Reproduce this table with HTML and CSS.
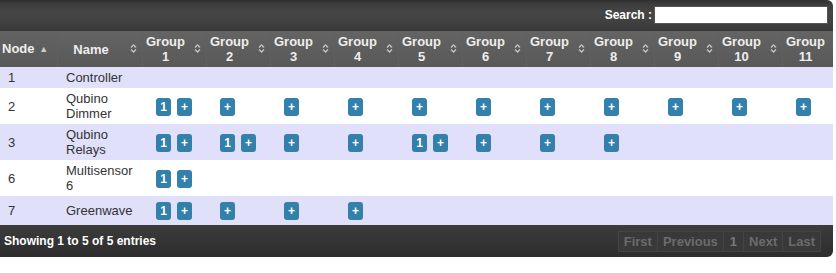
FILE: index.html
```html
<!DOCTYPE html>
<html>
<head>
<meta charset="utf-8">
<link rel="stylesheet" href="styles.css">
</head>
<body>
<div class="dt">
  <div class="toolbar">
    <label class="search-label">Search :</label>
    <input class="search-input" type="text">
  </div>
  <table class="grid">
    <colgroup>
      <col class="c-node"><col class="c-name">
      <col class="c-grp"><col class="c-grp"><col class="c-grp"><col class="c-grp"><col class="c-grp"><col class="c-grp"><col class="c-grp"><col class="c-grp"><col class="c-grp"><col class="c-grp"><col class="c-grp">
    </colgroup>
    <thead>
      <tr>
        <th class="th-node">Node <span class="tri">▲</span></th>
        <th>Name<svg class="sort" viewBox="0 0 7 9"><path d="M1 3.5 L3.5 1 L6 3.5 M1 5.5 L3.5 8 L6 5.5"/></svg></th>
        <th>Group<br>1<svg class="sort" viewBox="0 0 7 9"><path d="M1 3.5 L3.5 1 L6 3.5 M1 5.5 L3.5 8 L6 5.5"/></svg></th>
        <th>Group<br>2<svg class="sort" viewBox="0 0 7 9"><path d="M1 3.5 L3.5 1 L6 3.5 M1 5.5 L3.5 8 L6 5.5"/></svg></th>
        <th>Group<br>3<svg class="sort" viewBox="0 0 7 9"><path d="M1 3.5 L3.5 1 L6 3.5 M1 5.5 L3.5 8 L6 5.5"/></svg></th>
        <th>Group<br>4<svg class="sort" viewBox="0 0 7 9"><path d="M1 3.5 L3.5 1 L6 3.5 M1 5.5 L3.5 8 L6 5.5"/></svg></th>
        <th>Group<br>5<svg class="sort" viewBox="0 0 7 9"><path d="M1 3.5 L3.5 1 L6 3.5 M1 5.5 L3.5 8 L6 5.5"/></svg></th>
        <th>Group<br>6<svg class="sort" viewBox="0 0 7 9"><path d="M1 3.5 L3.5 1 L6 3.5 M1 5.5 L3.5 8 L6 5.5"/></svg></th>
        <th>Group<br>7<svg class="sort" viewBox="0 0 7 9"><path d="M1 3.5 L3.5 1 L6 3.5 M1 5.5 L3.5 8 L6 5.5"/></svg></th>
        <th>Group<br>8<svg class="sort" viewBox="0 0 7 9"><path d="M1 3.5 L3.5 1 L6 3.5 M1 5.5 L3.5 8 L6 5.5"/></svg></th>
        <th>Group<br>9<svg class="sort" viewBox="0 0 7 9"><path d="M1 3.5 L3.5 1 L6 3.5 M1 5.5 L3.5 8 L6 5.5"/></svg></th>
        <th>Group<br>10<svg class="sort" viewBox="0 0 7 9"><path d="M1 3.5 L3.5 1 L6 3.5 M1 5.5 L3.5 8 L6 5.5"/></svg></th>
        <th>Group<br>11<svg class="sort" viewBox="0 0 7 9"><path d="M1 3.5 L3.5 1 L6 3.5 M1 5.5 L3.5 8 L6 5.5"/></svg></th>
      </tr>
    </thead>
    <tbody>
      <tr class="odd">
        <td>1</td><td class="nm">Controller</td>
        <td></td><td></td><td></td><td></td><td></td><td></td><td></td><td></td><td></td><td></td><td></td>
      </tr>
      <tr class="even">
        <td>2</td><td class="nm">Qubino<br>Dimmer</td>
        <td class="g"><span class="bw"><span class="b">1</span><span class="b">+</span></span></td>
        <td class="g"><span class="bw"><span class="b">+</span></span></td>
        <td class="g"><span class="bw"><span class="b">+</span></span></td>
        <td class="g"><span class="bw"><span class="b">+</span></span></td>
        <td class="g"><span class="bw"><span class="b">+</span></span></td>
        <td class="g"><span class="bw"><span class="b">+</span></span></td>
        <td class="g"><span class="bw"><span class="b">+</span></span></td>
        <td class="g"><span class="bw"><span class="b">+</span></span></td>
        <td class="g"><span class="bw"><span class="b">+</span></span></td>
        <td class="g"><span class="bw"><span class="b">+</span></span></td>
        <td class="g"><span class="bw"><span class="b">+</span></span></td>
      </tr>
      <tr class="odd">
        <td>3</td><td class="nm">Qubino<br>Relays</td>
        <td class="g"><span class="bw"><span class="b">1</span><span class="b">+</span></span></td>
        <td class="g"><span class="bw"><span class="b">1</span><span class="b">+</span></span></td>
        <td class="g"><span class="bw"><span class="b">+</span></span></td>
        <td class="g"><span class="bw"><span class="b">+</span></span></td>
        <td class="g"><span class="bw"><span class="b">1</span><span class="b">+</span></span></td>
        <td class="g"><span class="bw"><span class="b">+</span></span></td>
        <td class="g"><span class="bw"><span class="b">+</span></span></td>
        <td class="g"><span class="bw"><span class="b">+</span></span></td>
        <td></td><td></td><td></td>
      </tr>
      <tr class="even">
        <td>6</td><td class="nm">Multisensor<br>6</td>
        <td class="g"><span class="bw"><span class="b">1</span><span class="b">+</span></span></td>
        <td></td><td></td><td></td><td></td><td></td><td></td><td></td><td></td><td></td><td></td>
      </tr>
      <tr class="odd">
        <td>7</td><td class="nm">Greenwave</td>
        <td class="g"><span class="bw"><span class="b">1</span><span class="b">+</span></span></td>
        <td class="g"><span class="bw"><span class="b">+</span></span></td>
        <td class="g"><span class="bw"><span class="b">+</span></span></td>
        <td class="g"><span class="bw"><span class="b">+</span></span></td>
        <td></td><td></td><td></td><td></td><td></td><td></td><td></td>
      </tr>
    </tbody>
  </table>
  <div class="footer">
    <div class="info">Showing 1 to 5 of 5 entries</div>
    <div class="pager">
      <span class="pbtn">First</span><span class="pbtn">Previous</span><span class="pbtn cur">1</span><span class="pbtn">Next</span><span class="pbtn">Last</span>
    </div>
  </div>
</div>
</body>
</html>
```
FILE: styles.css
```css
html, body {
  margin: 0;
  padding: 0;
  background: #fff;
}
body {
  font-family: "Liberation Sans", Arial, sans-serif;
  font-size: 13px;
}
.dt {
  width: 833px;
  overflow: hidden;
}
.toolbar {
  height: 31px;
  box-sizing: border-box;
  display: flex;
  justify-content: flex-end;
  align-items: center;
  padding: 0 5px 1px 0;
  border-top-right-radius: 6px;
  background: linear-gradient(to bottom, #303030 0px, #3c3c3c 4px, #464646 12px, #424242 20px, #383838 31px);
}
.search-label {
  color: #fff;
  font-weight: bold;
  font-size: 12px;
  margin-right: 2px;
}
.search-input {
  width: 174px;
  height: 18px;
  box-sizing: border-box;
  border: 1px solid #555;
  background: #fff;
  margin: 0;
  padding: 0 2px;
}
.grid {
  width: 846px;
  table-layout: fixed;
  border-collapse: collapse;
}
.c-node { width: 57px; }
.c-name { width: 85px; }
.c-grp { width: 64px; }
.grid th {
  position: relative;
  height: 36px;
  box-sizing: border-box;
  padding: 3px 20px 3px 3px;
  color: #eee;
  font-weight: bold;
  font-size: 13px;
  line-height: 15px;
  text-align: center;
  vertical-align: middle;
  background: linear-gradient(to bottom, #636363, #595959);
  border-right: 1px solid #606060;
}
.grid th.th-node {
  text-align: left;
  padding-left: 2px;
  padding-right: 0;
}
.tri {
  font-size: 9px;
  color: #ccc;
  vertical-align: 1px;
  margin-left: 1px;
}
.sort {
  position: absolute;
  right: 5px;
  top: 50%;
  width: 7px;
  height: 9px;
  margin-top: -5px;
  fill: none;
  stroke: #c4c4c4;
  stroke-width: 1.3;
}
.grid td {
  padding: 3px 8px;
  color: #333;
  font-size: 13px;
  line-height: 15px;
  vertical-align: middle;
  white-space: nowrap;
}
.grid td.nm {
  padding-left: 9px;
}
.grid td.g {
  padding-left: 14px;
}
.odd td { background: #e0e0fa; }
.even td { background: #fff; }
.bw {
  display: flex;
  gap: 6px;
  margin: 3px 0 2px;
}
.b {
  display: inline-flex;
  align-items: center;
  justify-content: center;
  width: 15px;
  height: 18px;
  border-radius: 3px;
  background: #3381aa;
  color: #fff;
  font-weight: bold;
  font-size: 12px;
  line-height: 18px;
}
.footer {
  height: 32px;
  box-sizing: border-box;
  display: flex;
  justify-content: space-between;
  align-items: center;
  padding: 0 12px 0 4px;
  border-bottom-right-radius: 6px;
  background: linear-gradient(to bottom, #3c3c3c, #333 60%, #2c2c2c);
}
.info {
  color: #fff;
  font-weight: bold;
  font-size: 12px;
}
.pager {
  display: flex;
}
.pbtn {
  display: inline-block;
  padding: 0 5px;
  height: 21px;
  box-sizing: border-box;
  line-height: 19px;
  border: 1px solid #444;
  margin-left: -1px;
  background: #393939;
  color: #6c6c6c;
  font-weight: bold;
  font-size: 13px;
}
.pbtn.cur {
  color: #7a7a7a;
  padding: 0 6px;
}
```
